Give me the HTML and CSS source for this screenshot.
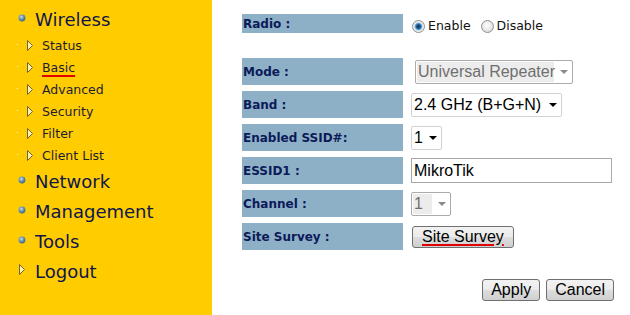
FILE: index.html
```html
<!DOCTYPE html>
<html lang="en">
<head>
    <meta charset="UTF-8">
    <meta name="viewport" content="width=device-width, initial-scale=1.0">
    <title>Wireless - Basic</title>
    <link rel="stylesheet" href="styles.css">
</head>
<body>

    <div class="page">

        <!-- Menu kiri -->
        <div class="sidebar">
            <div class="menu-item">
                <svg class="ball" width="8" height="8" viewBox="0 0 8 8"><defs><radialGradient id="b1" cx="40%" cy="35%" r="65%"><stop offset="0" stop-color="#c9dcea"/><stop offset="0.5" stop-color="#6d97b8"/><stop offset="1" stop-color="#3a6587"/></radialGradient></defs><circle cx="4" cy="4" r="3.4" fill="url(#b1)"/></svg>
                Wireless
            </div>
            <div class="sub-item"><svg class="arrow" width="17" height="11" viewBox="0 0 17 11"><rect x="0" y="4" width="1" height="1" fill="#fff6cc"/><path d="M10.5 0.5 L15.5 5.5 L10.5 10.5 Z" fill="#fff1a8" stroke="#6e6340" stroke-width="1"/></svg>Status</div>
            <div class="sub-item"><svg class="arrow" width="17" height="11" viewBox="0 0 17 11"><rect x="0" y="4" width="1" height="1" fill="#fff6cc"/><path d="M10.5 0.5 L15.5 5.5 L10.5 10.5 Z" fill="#fff1a8" stroke="#6e6340" stroke-width="1"/></svg><span class="current">Basic</span></div>
            <div class="sub-item"><svg class="arrow" width="17" height="11" viewBox="0 0 17 11"><rect x="0" y="4" width="1" height="1" fill="#fff6cc"/><path d="M10.5 0.5 L15.5 5.5 L10.5 10.5 Z" fill="#fff1a8" stroke="#6e6340" stroke-width="1"/></svg>Advanced</div>
            <div class="sub-item"><svg class="arrow" width="17" height="11" viewBox="0 0 17 11"><rect x="0" y="4" width="1" height="1" fill="#fff6cc"/><path d="M10.5 0.5 L15.5 5.5 L10.5 10.5 Z" fill="#fff1a8" stroke="#6e6340" stroke-width="1"/></svg>Security</div>
            <div class="sub-item"><svg class="arrow" width="17" height="11" viewBox="0 0 17 11"><rect x="0" y="4" width="1" height="1" fill="#fff6cc"/><path d="M10.5 0.5 L15.5 5.5 L10.5 10.5 Z" fill="#fff1a8" stroke="#6e6340" stroke-width="1"/></svg>Filter</div>
            <div class="sub-item"><svg class="arrow" width="17" height="11" viewBox="0 0 17 11"><rect x="0" y="4" width="1" height="1" fill="#fff6cc"/><path d="M10.5 0.5 L15.5 5.5 L10.5 10.5 Z" fill="#fff1a8" stroke="#6e6340" stroke-width="1"/></svg>Client List</div>
            <div class="menu-item">
                <svg class="ball" width="8" height="8" viewBox="0 0 8 8"><circle cx="4" cy="4" r="3.4" fill="url(#b1)"/></svg>
                Network
            </div>
            <div class="menu-item">
                <svg class="ball" width="8" height="8" viewBox="0 0 8 8"><circle cx="4" cy="4" r="3.4" fill="url(#b1)"/></svg>
                Management
            </div>
            <div class="menu-item">
                <svg class="ball" width="8" height="8" viewBox="0 0 8 8"><circle cx="4" cy="4" r="3.4" fill="url(#b1)"/></svg>
                Tools
            </div>
            <div class="menu-item">
                <svg class="ball" width="8" height="11" viewBox="0 0 8 11"><path d="M1.5 0.5 L6.5 5.5 L1.5 10.5 Z" fill="#fff1a8" stroke="#6e6340" stroke-width="1"/></svg>
                Logout
            </div>
        </div>

        <!-- Form pengaturan -->
        <div class="content">
            <div class="form">
                <div class="label label-short">Radio :</div>
                <div class="value value-short">
                    <label class="radio"><input type="radio" name="radio" checked>Enable</label>
                    <label class="radio"><input type="radio" name="radio">Disable</label>
                </div>

                <div class="spacer"></div>

                <div class="label">Mode :</div>
                <div class="value">
                    <span class="select select-off mode">
                        <select disabled><option>Universal Repeater</option></select>
                    </span>
                </div>

                <div class="label">Band :</div>
                <div class="value">
                    <span class="select band">
                        <select><option>2.4 GHz (B+G+N)</option></select>
                    </span>
                </div>

                <div class="label">Enabled SSID#:</div>
                <div class="value">
                    <span class="select ssid-count">
                        <select><option>1</option></select>
                    </span>
                </div>

                <div class="label">ESSID1 :</div>
                <div class="value">
                    <input type="text" class="text-input" value="MikroTik">
                </div>

                <div class="label">Channel :</div>
                <div class="value">
                    <span class="select select-off channel">
                        <select disabled><option>1</option></select>
                    </span>
                </div>

                <div class="label">Site Survey :</div>
                <div class="value">
                    <button class="button survey"><span class="marked">Site Survey</span></button>
                </div>
            </div>

            <div class="actions">
                <button class="button">Apply</button>
                <button class="button">Cancel</button>
            </div>
        </div>

    </div>

</body>
</html>
```

FILE: styles.css
```css
body {
    margin: 0;
    font-family: 'DejaVu Sans', Verdana, sans-serif;
    background: #ffffff;
}

.page {
    display: flex;
    min-height: 315px;
}

/* Menu kiri */
.sidebar {
    width: 212px;
    flex-shrink: 0;
    background: #ffcc00;
    padding-top: 4px;
    box-sizing: border-box;
}

.menu-item {
    display: flex;
    align-items: center;
    height: 30px;
    padding-left: 18px;
    font-size: 18px;
    color: #10164a;
}

.menu-item .ball {
    width: 8px;
    margin-right: 9px;
    margin-bottom: 3px;
}

.sub-item {
    display: flex;
    align-items: center;
    height: 22px;
    padding-left: 17px;
    font-size: 12.5px;
    color: #1c1c36;
}

.sub-item .arrow {
    margin-right: 8px;
}

.current {
    text-decoration: underline;
    text-decoration-color: #e00000;
    text-decoration-thickness: 2px;
    text-underline-offset: 3px;
}

/* Form */
.content {
    flex: 1;
    padding: 14px 16px 0 30px;
}

.form {
    display: grid;
    grid-template-columns: 161px 1fr;
    grid-template-rows: 19px 13px repeat(6, 27px);
    row-gap: 6px;
}

.spacer {
    grid-column: 1 / -1;
}

.label {
    display: flex;
    align-items: center;
    padding-left: 1px;
    background: #8db0c7;
    color: #0c1a58;
    font-weight: bold;
    font-size: 12px;
}

.value {
    display: flex;
    align-items: center;
    padding-left: 8px;
}

.value-short {
    align-items: flex-end;
    padding-left: 9px;
}

.radio {
    display: flex;
    align-items: center;
    margin-right: 10px;
    font-size: 12.5px;
    color: #111;
    line-height: 14px;
}

.radio input {
    appearance: none;
    width: 13px;
    height: 13px;
    margin: 0 3px 0 0;
    border: 1px solid #8e8f8f;
    border-radius: 50%;
    background: radial-gradient(circle at 45% 40%, #ffffff 0, #e6e6e6 55%, #cdcdcd 100%);
    box-sizing: border-box;
}

.radio input:checked {
    background: radial-gradient(circle at 50% 50%, #0e2c52 0, #1f5c93 2px, #4d93cc 3px, #cfdde8 4px, #f0f0f0 5px, #d6d6d6 100%);
}

.select {
    position: relative;
    display: inline-block;
}

.select select {
    appearance: none;
    display: block;
    height: 24px;
    margin: 0;
    padding: 0 16px 0 2px;
    border: 1px solid #d2d2d2;
    border-radius: 2px;
    background: #ffffff;
    font-family: 'Liberation Sans', Arial, sans-serif;
    font-size: 16px;
    color: #000;
    opacity: 1;
    box-sizing: border-box;
}

.select::after {
    content: "";
    position: absolute;
    right: 5px;
    top: 10px;
    border-left: 4px solid transparent;
    border-right: 4px solid transparent;
    border-top: 4px solid #000;
}

.select-off select {
    border-color: #ababab;
    color: #6f6f6f;
    background: linear-gradient(#ececec, #ececec) no-repeat 1px 1px / calc(100% - 19px) calc(100% - 2px), #ffffff;
}

.select-off::after {
    border-top-color: #8a8a8a;
}

.mode {
    margin-left: 4px;
}

.mode select {
    width: 158px;
    padding-left: 2px;
    padding-right: 12px;
}

.band select {
    width: 151px;
}

.ssid-count select {
    width: 31px;
}

.channel select {
    width: 40px;
}

.text-input {
    width: 201px;
    height: 25px;
    margin: 0;
    padding: 0 2px;
    border: 1px solid #a9a9a9;
    font-family: 'Liberation Sans', Arial, sans-serif;
    font-size: 16px;
    color: #000;
    box-sizing: border-box;
}

.button {
    height: 22px;
    padding: 0 8px;
    border: 1px solid #707070;
    border-radius: 3px;
    background: linear-gradient(#f2f2f2 0%, #ebebeb 50%, #dddddd 51%, #cfcfcf 100%);
    font-family: 'Liberation Sans', Arial, sans-serif;
    font-size: 16px;
    line-height: 18px;
    color: #000;
}

.survey {
    margin-left: 1px;
    padding: 0 9px;
}

.marked {
    text-decoration: underline;
    text-decoration-color: #e00000;
    text-decoration-thickness: 2px;
    text-underline-offset: 2px;
}

.actions {
    display: flex;
    justify-content: flex-end;
    gap: 6px;
    margin-top: 29px;
}
```
